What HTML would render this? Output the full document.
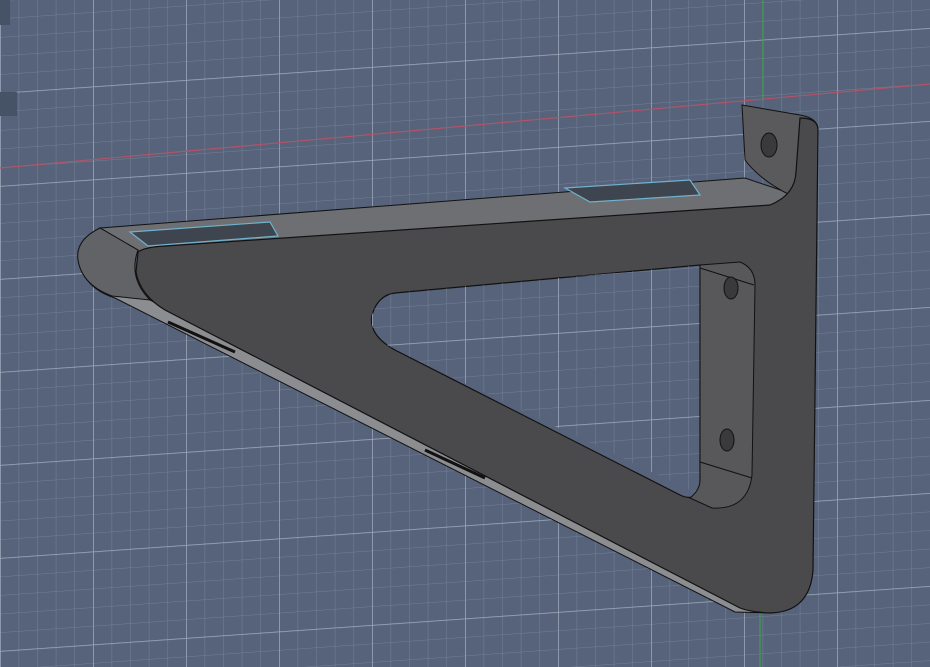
<!DOCTYPE html>
<html><head><style>html,body{margin:0;padding:0;width:930px;height:667px;overflow:hidden;background:#56637a}</style></head>
<body>
<svg width="930" height="667" viewBox="0 0 930 667" xmlns="http://www.w3.org/2000/svg">
<defs>
<pattern id="g" width="18.6" height="18.6" patternUnits="userSpaceOnUse" patternTransform="skewY(-4)">
<path d="M0 0H18.6M0 0V18.6" stroke="#728098" stroke-width="1.1" fill="none"/>
</pattern>
<pattern id="G" width="93" height="93" patternUnits="userSpaceOnUse" patternTransform="skewY(-4)">
<path d="M0 0H93M0 0V93" stroke="#9ea9bb" stroke-width="1.5" fill="none"/>
</pattern>
<clipPath id="hc"><path d="M395 293 L700 265 L700 495 L395 350 Q368 335 372 315 Q378 295 395 293 Z"/></clipPath>
</defs>
<rect width="930" height="667" fill="#56637a"/>
<rect width="930" height="667" fill="url(#g)"/>
<rect width="930" height="667" fill="url(#G)"/>
<rect x="0" y="0" width="10" height="25" fill="#465266"/>
<rect x="0" y="92" width="17" height="24" fill="#465266"/>
<line x1="0" y1="168" x2="930" y2="84" stroke="#b0546a" stroke-width="1.2"/>
<line x1="763" y1="0" x2="763" y2="100" stroke="#3fa04a" stroke-width="1.2"/>
<line x1="760" y1="605" x2="760" y2="667" stroke="#3fa04a" stroke-width="1.2"/>
<path d="M80 262 Q84 288 115 298 L735 612 L770 613 L150 300 Z" fill="#8c8d90" stroke="#111" stroke-width="1"/>
<path d="M100 228 L745 178 L795 195 L775 205 L140 252 Z" fill="#6e6f72" stroke="#111" stroke-width="1"/>
<path d="M130 232 L270 222 L278 236 L148 246 Z" fill="#3e454e" stroke="#6fb2d0" stroke-width="1.2"/>
<path d="M565 188 L690 180 L700 195 L590 202 Z" fill="#3e454e" stroke="#6fb2d0" stroke-width="1.2"/>
<path d="M100 228 Q75 240 78 260 Q82 285 112 296 L150 300 Q128 278 138 250 Z" fill="#626366" stroke="#111" stroke-width="1"/>
<path d="M742 105 L800 115 Q818 118 818 130 L790 195 Q760 180 745 160 Z" fill="#5a5a5d" stroke="#111" stroke-width="1"/>
<ellipse cx="769" cy="145" rx="8" ry="12" fill="#3a3a3c" stroke="#111"/>
<path d="M138 252 Q145 247 165 246 L770 205 Q795 195 796 172 L800 118 Q818 118 818 130 L813 570 Q810 612 770 613 Q750 612 740 608 L165 310 Q140 295 136 272 Z" fill="#4a4a4c" stroke="#111" stroke-width="1.2"/>
<path d="M395 293 L700 265 L700 495 Q690 500 680 495 L395 350 Q368 335 372 315 Q378 295 395 293 Z" fill="#56637a" stroke="#111" stroke-width="1.2"/>
<rect width="930" height="667" fill="url(#g)" clip-path="url(#hc)"/>
<rect width="930" height="667" fill="url(#G)" clip-path="url(#hc)"/>
<path d="M700 265 L740 262 Q755 268 755 285 L752 475 Q748 510 712 508 L690 498 Q700 490 700 480 Z" fill="#58585b" stroke="#111" stroke-width="1"/>
<line x1="700" y1="268" x2="754" y2="285" stroke="#111"/>
<line x1="700" y1="462" x2="752" y2="478" stroke="#111"/>
<ellipse cx="731" cy="288" rx="7" ry="11" fill="#3a3a3c" stroke="#111"/>
<ellipse cx="727" cy="440" rx="7" ry="11" fill="#3a3a3c" stroke="#111"/>
<path d="M168 322 L235 352" stroke="#111" stroke-width="3"/>
<path d="M425 450 L485 478" stroke="#111" stroke-width="3"/>
</svg>
</body></html>
